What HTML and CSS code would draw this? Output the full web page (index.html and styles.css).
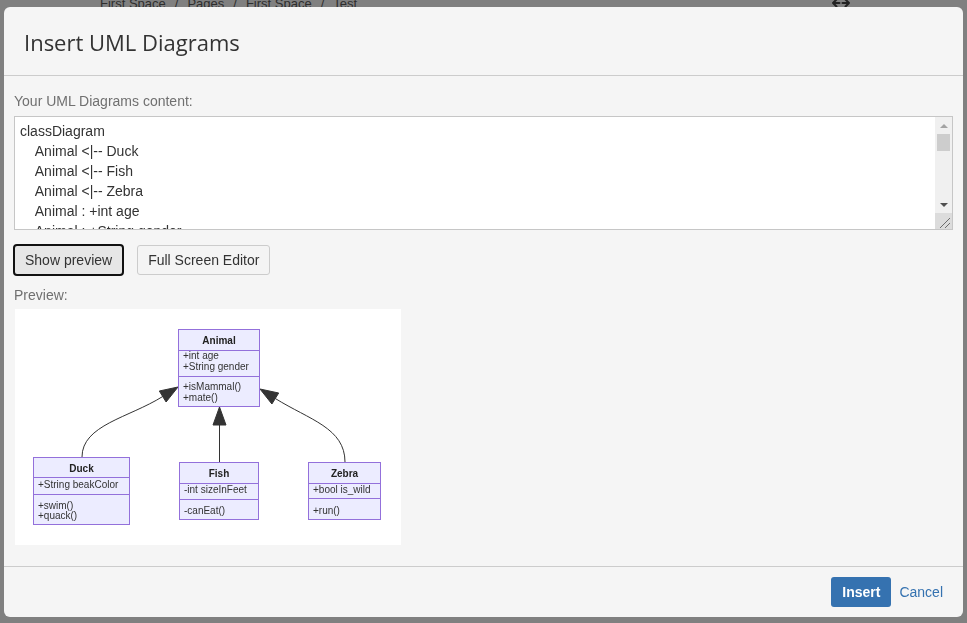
FILE: index.html
```html
<!DOCTYPE html>
<html lang="en">
<head>
<meta charset="utf-8">
<title>Insert UML Diagrams</title>
<link rel="stylesheet" href="styles.css">
</head>
<body>
<div class="page">
  <nav class="breadcrumb">
    <span>First Space</span><span class="sep">/</span><span>Pages</span><span class="sep">/</span><span>First Space</span><span class="sep">/</span><span>Test</span>
  </nav>
  <svg class="expand-icon" width="18" height="12" viewBox="0 0 18 12" aria-hidden="true">
    <path d="M1 6 L4.5 2.5 M1 6 L4.5 9.5 M1 6 H7.5" stroke="#222" stroke-width="2" fill="none" stroke-linecap="round"/>
    <path d="M17 6 L13.5 2.5 M17 6 L13.5 9.5 M17 6 H10.5" stroke="#222" stroke-width="2" fill="none" stroke-linecap="round"/>
  </svg>
</div>

<div class="modal" role="dialog">
  <header class="modal-header">
    <h2 class="modal-title">Insert UML Diagrams</h2>
  </header>
  <section class="modal-body">
    <label class="field-label" for="uml">Your UML Diagrams content:</label>
    <div class="editor">
      <textarea id="uml" class="editor-text" spellcheck="false">classDiagram
    Animal &lt;|-- Duck
    Animal &lt;|-- Fish
    Animal &lt;|-- Zebra
    Animal : +int age
    Animal : +String gender
    Animal: +isMammal()
    Animal: +mate()
    class Duck{
      +String beakColor
      +swim()
      +quack()
    }</textarea>
      <div class="scrollbar">
        <div class="sb-btn"><span class="tri-up"></span></div>
        <div class="sb-thumb"></div>
        <div class="sb-track"></div>
        <div class="sb-btn"><span class="tri-down"></span></div>
        <div class="sb-corner">
          <svg width="17" height="16" viewBox="0 0 17 16" aria-hidden="true">
            <path d="M15 5 L5 15 M15 10 L10 15" stroke="#6d6d6d" stroke-width="1" fill="none"/>
          </svg>
        </div>
      </div>
    </div>
    <div class="actions">
      <button class="btn btn-focus" type="button">Show preview</button>
      <button class="btn btn-light" type="button">Full Screen Editor</button>
    </div>
    <div class="field-label preview-label">Preview:</div>
    <div class="preview">
      <svg class="diagram" width="386" height="236" viewBox="15 309 386 236">
        <g fill="none" stroke="#333" stroke-width="1">
          <path d="M82 457 C82 425 129 417.7 162.7 396.5"/>
          <path d="M219.5 462 V425"/>
          <path d="M345 462 C345 428 309.3 419.7 275.3 398.5"/>
        </g>
        <g fill="#333" stroke="#333" stroke-width="1" stroke-linejoin="miter">
          <polygon points="178,387 166.1,402 159.3,391"/>
          <polygon points="219.5,407 213,425 226,425"/>
          <polygon points="260,389 278.7,393 271.9,404"/>
        </g>
        <g fill="#ECECFF" stroke="#9370DB" stroke-width="1">
          <rect x="178.5" y="329.5" width="81" height="77"/>
          <path d="M178.5 350.5 H259.5 M178.5 376.5 H259.5"/>
          <rect x="33.5" y="457.5" width="96" height="67"/>
          <path d="M33.5 477.5 H129.5 M33.5 494.5 H129.5"/>
          <rect x="179.5" y="462.5" width="79" height="57"/>
          <path d="M179.5 483.5 H258.5 M179.5 499.5 H258.5"/>
          <rect x="308.5" y="462.5" width="72" height="57"/>
          <path d="M308.5 483.5 H380.5 M308.5 498.5 H380.5"/>
        </g>
        <g class="uml-text">
          <text class="uml-title" x="219" y="344">Animal</text>
          <text x="183" y="359">+int age</text>
          <text x="183" y="369.5">+String gender</text>
          <text x="183" y="390">+isMammal()</text>
          <text x="183" y="400.5">+mate()</text>

          <text class="uml-title" x="81.5" y="472">Duck</text>
          <text x="38" y="487.5">+String beakColor</text>
          <text x="38" y="508.5">+swim()</text>
          <text x="38" y="519">+quack()</text>

          <text class="uml-title" x="219" y="477">Fish</text>
          <text x="184" y="493">-int sizeInFeet</text>
          <text x="184" y="513.5">-canEat()</text>

          <text class="uml-title" x="344.5" y="477">Zebra</text>
          <text x="313" y="493">+bool is_wild</text>
          <text x="313" y="513.5">+run()</text>
        </g>
      </svg>
    </div>
  </section>
  <footer class="modal-footer">
    <button class="btn-primary" type="button">Insert</button>
    <a class="link" href="#">Cancel</a>
  </footer>
</div>
</body>
</html>
```

FILE: styles.css
```css
html, body {
  margin: 0;
  padding: 0;
}

body {
  background: #808080;
  width: 967px;
  height: 623px;
  overflow: hidden;
  font-family: "Liberation Sans", Arial, sans-serif;
  font-size: 14px;
  color: #333;
}

.page {
  display: flex;
  align-items: flex-start;
  height: 16px;
}

.breadcrumb {
  margin-top: -4px;
  padding-left: 100px;
  font-family: "Liberation Sans", Arial, sans-serif;
  font-size: 13px;
  line-height: 16px;
  color: #2e2e2e;
}

.breadcrumb .sep {
  margin: 0 9px;
}

.expand-icon {
  margin-left: auto;
  margin-right: 117px;
  margin-top: -3px;
}

.modal {
  position: fixed;
  left: 4px;
  top: 7px;
  width: 959px;
  height: 610px;
  background: #f5f5f5;
  border-radius: 6px;
  display: flex;
  flex-direction: column;
  overflow: hidden;
}

.modal-header {
  flex-shrink: 0;
  box-sizing: content-box;
  height: 66px;
  padding: 2px 20px 0;
  border-bottom: 1px solid #cccccc;
  display: flex;
  align-items: center;
}

.modal-title {
  margin: 0;
  font-family: "Open Sans", "Liberation Sans", sans-serif;
  font-weight: 400;
  font-size: 22px;
  color: #333;
}

.modal-body {
  flex: 1;
  padding: 15px 10px 0;
  display: flex;
  flex-direction: column;
  align-items: flex-start;
}

.field-label {
  display: block;
  font-size: 14px;
  line-height: 20px;
  color: #707070;
}

.editor {
  margin-top: 5px;
  width: 939px;
  height: 114px;
  box-sizing: border-box;
  border: 1px solid #c6c6c6;
  background: #fff;
  display: flex;
}

.editor-text {
  flex: 1;
  border: 0;
  margin: 0;
  padding: 4px 5px 0;
  font-family: "Liberation Sans", Arial, sans-serif;
  font-size: 14px;
  line-height: 20px;
  color: #333;
  background: transparent;
  resize: none;
  overflow: hidden;
  white-space: pre;
  outline: none;
}

.scrollbar {
  width: 17px;
  background: #f0f0f0;
  display: flex;
  flex-direction: column;
}

.sb-btn {
  height: 17px;
  display: flex;
  align-items: center;
  justify-content: center;
}

.tri-up {
  width: 0;
  height: 0;
  border-left: 4px solid transparent;
  border-right: 4px solid transparent;
  border-bottom: 4px solid #a3a3a3;
}

.tri-down {
  width: 0;
  height: 0;
  border-left: 4px solid transparent;
  border-right: 4px solid transparent;
  border-top: 4px solid #505050;
}

.sb-thumb {
  height: 17px;
  margin: 0 2px;
  background: #cdcdcd;
}

.sb-track {
  flex: 1;
}

.sb-corner {
  height: 16px;
  background: #dcdcdc;
  display: flex;
}

.actions {
  margin-top: 14px;
  margin-left: -1px;
  display: flex;
  align-items: center;
  gap: 13px;
}

.btn {
  font-family: "Liberation Sans", Arial, sans-serif;
  font-size: 14px;
  color: #333;
  padding: 0 10px;
  margin: 0;
  cursor: pointer;
}

.btn-focus {
  height: 32px;
  border: 2px solid #111;
  border-radius: 4px;
  background: #e6e6e6;
}

.btn-light {
  height: 30px;
  border: 1px solid #cccccc;
  border-radius: 3px;
  background: #f4f4f4;
}

.preview-label {
  margin-top: 9px;
}

.preview {
  margin-top: 4px;
  margin-left: 1px;
  width: 386px;
  height: 236px;
  background: #fff;
}

.diagram {
  display: block;
}

.uml-text text {
  font-family: "Liberation Sans", Arial, sans-serif;
  font-size: 10px;
  fill: #333;
}

.uml-text .uml-title {
  font-weight: 700;
  text-anchor: middle;
  fill: #222;
}

.modal-footer {
  flex: 0 0 50px;
  border-top: 1px solid #cccccc;
  display: flex;
  align-items: center;
  justify-content: flex-end;
  gap: 8px;
  padding: 0 20px;
}

.btn-primary {
  height: 30px;
  padding: 0 11px;
  border: 0;
  border-radius: 3px;
  background: #3572b0;
  color: #fff;
  font-family: "Liberation Sans", Arial, sans-serif;
  font-weight: 700;
  font-size: 14px;
  cursor: pointer;
}

.link {
  color: #3572b0;
  text-decoration: none;
  font-size: 14px;
}
```
